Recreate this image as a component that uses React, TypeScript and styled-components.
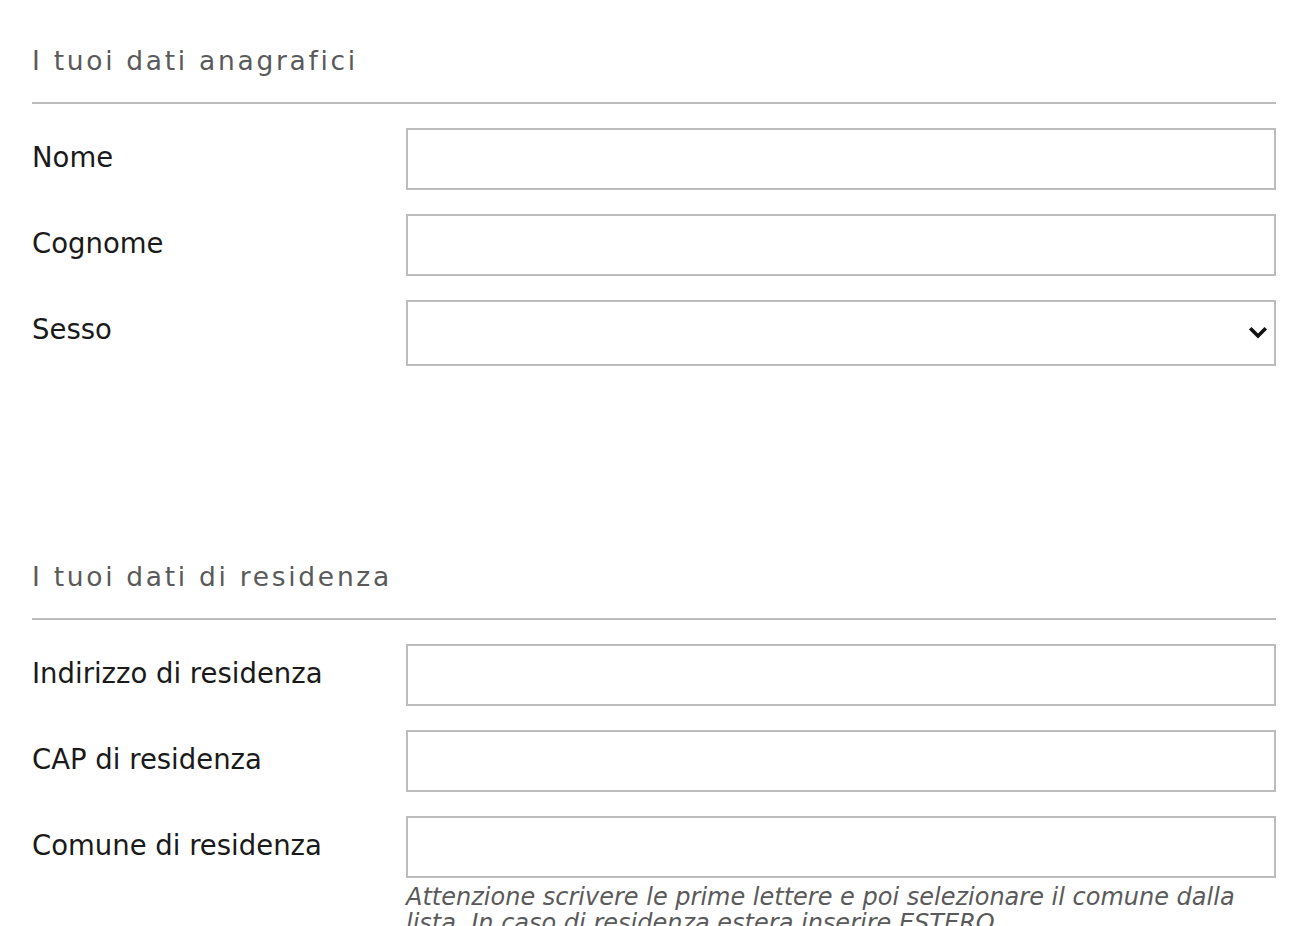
import React from "react";
import styled, { createGlobalStyle } from "styled-components";

const Global = createGlobalStyle`
  html, body { margin: 0; padding: 0; background: #fff; }
  body { font-family: "DejaVu Sans", "Liberation Sans", sans-serif; color: #1a1a1a; }
  * { box-sizing: border-box; }
`;

const Page = styled.div`
  padding: 41px 24px 0 32px;
  height: 926px;
  overflow: hidden;
`;

const Section = styled.section<{ $gap?: number }>`
  margin-bottom: ${(p) => p.$gap ?? 0}px;
`;

const Heading = styled.h2`
  margin: 0;
  font-weight: 400;
  font-size: 26.5px;
  line-height: 40px;
  letter-spacing: 2.7px;
  color: #5a5a5a;
  padding-bottom: 21px;
  border-bottom: 2px solid #bcbcbc;
`;

const Fields = styled.div`
  display: flex;
  flex-direction: column;
  gap: 24px;
  padding-top: 24px;
`;

const Row = styled.div`
  display: grid;
  grid-template-columns: 374px 1fr;
  align-items: start;
`;

const Label = styled.label`
  font-size: 27.5px;
  line-height: 32px;
  padding-top: 13px;
  color: #1a1a1a;
`;

const Control = styled.div`
  display: flex;
  flex-direction: column;
`;

const Input = styled.input<{ $h?: number }>`
  width: 100%;
  height: ${(p) => p.$h ?? 62}px;
  border: 2px solid #bdbdbd;
  background: #fff;
  font: inherit;
  font-size: 24px;
  padding: 0 12px;
  outline: none;
`;

const SelectWrap = styled.div`
  position: relative;
  height: 66px;
  border: 2px solid #bdbdbd;
  background: #fff;
`;

const Select = styled.select`
  appearance: none;
  width: 100%;
  height: 100%;
  border: none;
  background: transparent;
  font: inherit;
  font-size: 24px;
  padding: 0 12px;
  outline: none;
`;

const Chevron = styled.svg`
  position: absolute;
  right: 6px;
  top: 50%;
  transform: translateY(-50%);
  pointer-events: none;
`;

const Hint = styled.p`
  margin: 6px 0 0;
  font-style: italic;
  font-size: 24px;
  line-height: 26px;
  color: #5a5a5a;
`;

export default function App() {
  return (
    <>
      <Global />
      <Page>
        <Section $gap={191}>
          <Heading>I tuoi dati anagrafici</Heading>
          <Fields>
            <Row>
              <Label>Nome</Label>
              <Control><Input /></Control>
            </Row>
            <Row>
              <Label>Cognome</Label>
              <Control><Input /></Control>
            </Row>
            <Row>
              <Label>Sesso</Label>
              <Control>
                <SelectWrap>
                  <Select defaultValue="">
                    <option value=""></option>
                    <option value="M">M</option>
                    <option value="F">F</option>
                  </Select>
                  <Chevron width="20" height="14" viewBox="0 0 20 14">
                    <path d="M3.5 3.5 L10 10 L16.5 3.5" fill="none" stroke="#111" strokeWidth="3.6" strokeLinecap="square" />
                  </Chevron>
                </SelectWrap>
              </Control>
            </Row>
          </Fields>
        </Section>
        <Section>
          <Heading>I tuoi dati di residenza</Heading>
          <Fields>
            <Row>
              <Label>Indirizzo di residenza</Label>
              <Control><Input /></Control>
            </Row>
            <Row>
              <Label>CAP di residenza</Label>
              <Control><Input /></Control>
            </Row>
            <Row>
              <Label>Comune di residenza</Label>
              <Control>
                <Input />
                <Hint>
                  Attenzione scrivere le prime lettere e poi selezionare il comune dalla lista. In caso di residenza estera inserire ESTERO.
                </Hint>
              </Control>
            </Row>
          </Fields>
        </Section>
      </Page>
    </>
  );
}
